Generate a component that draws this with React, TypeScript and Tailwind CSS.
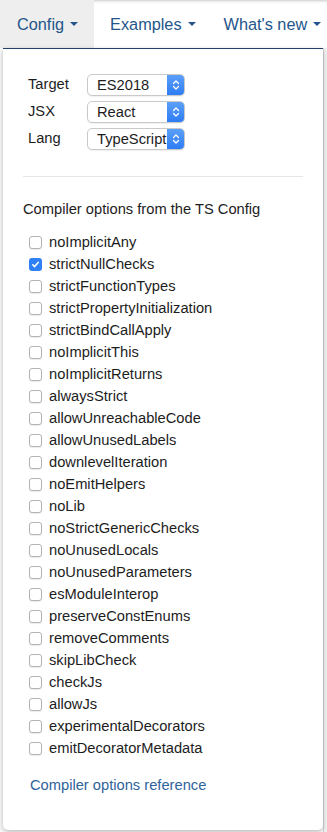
import React from "react"

const options = [
  { name: "noImplicitAny", checked: false },
  { name: "strictNullChecks", checked: true },
  { name: "strictFunctionTypes", checked: false },
  { name: "strictPropertyInitialization", checked: false },
  { name: "strictBindCallApply", checked: false },
  { name: "noImplicitThis", checked: false },
  { name: "noImplicitReturns", checked: false },
  { name: "alwaysStrict", checked: false },
  { name: "allowUnreachableCode", checked: false },
  { name: "allowUnusedLabels", checked: false },
  { name: "downlevelIteration", checked: false },
  { name: "noEmitHelpers", checked: false },
  { name: "noLib", checked: false },
  { name: "noStrictGenericChecks", checked: false },
  { name: "noUnusedLocals", checked: false },
  { name: "noUnusedParameters", checked: false },
  { name: "esModuleInterop", checked: false },
  { name: "preserveConstEnums", checked: false },
  { name: "removeComments", checked: false },
  { name: "skipLibCheck", checked: false },
  { name: "checkJs", checked: false },
  { name: "allowJs", checked: false },
  { name: "experimentalDecorators", checked: false },
  { name: "emitDecoratorMetadata", checked: false },
]

const settings = [
  { label: "Target", value: "ES2018" },
  { label: "JSX", value: "React" },
  { label: "Lang", value: "TypeScript" },
]

function Caret() {
  return (
    <span className="ml-[6px] inline-block h-0 w-0 border-x-[4px] border-t-[4px] border-x-transparent border-t-[#24558a]"></span>
  )
}

function Select({ value }: { value: string }) {
  return (
    <div className="flex h-[22px] w-[98px] items-center overflow-hidden rounded-[5px] border border-[#c9c9c9] bg-white shadow-[0_1px_1px_rgba(0,0,0,0.06)]">
      <div className="min-w-0 flex-1 overflow-hidden whitespace-nowrap pl-[9px] text-[14.7px] leading-[20px] text-[#1d1d1d]">{value}</div>
      <div className="flex h-full w-[17px] shrink-0 items-center justify-center bg-gradient-to-b from-[#5a9ff9] to-[#2c7cf4]">
        <svg width="8" height="12" viewBox="0 0 8 12" fill="none" stroke="white" strokeWidth="1.3" strokeLinecap="round" strokeLinejoin="round">
          <path d="M1.5 4.5 4 2l2.5 2.5" />
          <path d="M1.5 7.5 4 10l2.5-2.5" />
        </svg>
      </div>
    </div>
  )
}

function Checkbox({ checked }: { checked: boolean }) {
  if (checked) {
    return (
      <span className="flex h-[13px] w-[13px] items-center justify-center rounded-[3px] bg-[#2f80f5]">
        <svg width="9" height="9" viewBox="0 0 9 9" fill="none" stroke="white" strokeWidth="1.6" strokeLinecap="round" strokeLinejoin="round">
          <path d="M1.8 4.8 3.6 6.6 7.2 2.4" />
        </svg>
      </span>
    )
  }
  return <span className="h-[13px] w-[13px] rounded-[3px] border border-[#b3b3b3] bg-white shadow-[0_1px_1px_rgba(0,0,0,0.08)]"></span>
}

export default function App() {
  return (
    <div className="relative h-[832px] w-[327px] overflow-hidden bg-white font-['Liberation_Sans',Arial,sans-serif]">
      {/* top navigation */}
      <nav className="flex h-12 items-stretch text-[16.3px] text-[#24558a] shadow-[inset_0_3px_3px_-2px_rgba(0,0,0,0.22)]">
        <div className="flex items-center bg-[#eeeeee] pl-[17px] pr-[16px]">
          Config
          <Caret />
        </div>
        <div className="flex items-center pl-[16px] pr-[14px]">
          Examples
          <Caret />
        </div>
        <div className="flex items-center whitespace-nowrap px-[14px]">
          What's new
          <Caret />
        </div>
      </nav>

      {/* page behind the menu */}
      <div className="absolute right-0 top-[48px] h-[784px] w-[4px] border-l border-[#d6d6d6] bg-[#f2f2f2]"></div>
      <div className="absolute left-0 top-[48px] h-[784px] w-[3px] bg-[#fafafa]"></div>

      {/* config dropdown */}
      <div className="absolute left-[3px] top-[48px] h-[782px] w-[320px] rounded-b-[5px] border-t border-[#24426b] bg-white px-[20px] shadow-[0_2px_5px_rgba(0,0,0,0.28)]">
        <div className="pl-[5px] pt-[22px]">
          {settings.map((s) => (
            <div key={s.label} className="flex h-[27px] items-center">
              <span className="w-[59px] text-[14.7px] text-[#1d1d1d]">{s.label}</span>
              <Select value={s.value} />
            </div>
          ))}
        </div>

        <div className="mt-[24px] h-px bg-[#e6e6e6]"></div>

        <div className="mt-[22px] h-[20px] text-[14.7px] leading-[20px] text-[#1d1d1d]">Compiler options from the TS Config</div>

        <ul className="mt-[12px] pl-[6px]">
          {options.map((o) => (
            <li key={o.name} className="flex h-[22px] items-center gap-[7px]">
              <Checkbox checked={o.checked} />
              <span className="text-[14.7px] leading-[20px] text-[#1d1d1d]">{o.name}</span>
            </li>
          ))}
        </ul>

        <a href="#" className="mt-[16px] block pl-[7px] text-[14.7px] leading-[20px] text-[#2f649b]">
          Compiler options reference
        </a>
      </div>
    </div>
  )
}
